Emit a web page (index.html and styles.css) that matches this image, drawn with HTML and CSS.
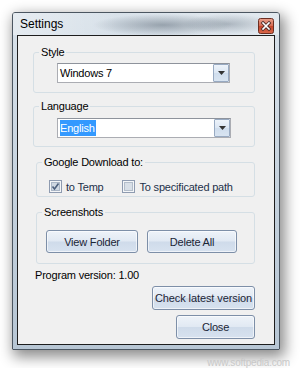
FILE: index.html
```html
<!DOCTYPE html>
<html lang="en">
<head>
  <meta charset="UTF-8">
  <title>Settings</title>
  <link rel="stylesheet" href="styles.css">
</head>
<body>
  <div class="window">
    <div class="titlebar">
      <span class="title">Settings</span>
      <span class="close">
        <svg width="16" height="16" viewBox="0 0 16 16">
          <defs>
            <linearGradient id="red" x1="0" y1="0" x2="0" y2="1">
              <stop offset="0" stop-color="#e9a08c"/>
              <stop offset="0.5" stop-color="#d46a52"/>
              <stop offset="0.51" stop-color="#c5452c"/>
              <stop offset="1" stop-color="#d9684a"/>
            </linearGradient>
          </defs>
          <rect x="0.5" y="0.5" width="15" height="15" rx="2" fill="url(#red)" stroke="#6b2e22"/>
          <path d="M5 5 L11 11 M11 5 L5 11" stroke="#4a2a26" stroke-width="3.2" stroke-linecap="square"/>
          <path d="M5 5 L11 11 M11 5 L5 11" stroke="#fff" stroke-width="1.6" stroke-linecap="square"/>
        </svg>
      </span>
    </div>
    <div class="client">
      <div class="group style-group">
        <span class="legend">Style</span>
        <div class="combo style-combo">
          <span class="value">Windows 7</span>
          <span class="drop"><svg width="7" height="4" viewBox="0 0 7 4"><path d="M0 0 H7 L3.5 4 Z" fill="#333"/></svg></span>
        </div>
      </div>

      <div class="group lang-group">
        <span class="legend">Language</span>
        <div class="combo lang-combo">
          <span class="value"><span class="sel">English</span></span>
          <span class="drop"><svg width="7" height="4" viewBox="0 0 7 4"><path d="M0 0 H7 L3.5 4 Z" fill="#333"/></svg></span>
        </div>
      </div>

      <div class="group google-group">
        <span class="legend">Google Download to:</span>
        <div class="checks">
          <label class="check first">
            <svg width="13" height="13" viewBox="0 0 13 13">
              <rect x="0.5" y="0.5" width="12" height="12" fill="#f4f6f8" stroke="#8e9bb0"/>
              <rect x="2.5" y="2.5" width="8" height="8" fill="#cfd8e2" stroke="#aab6c6"/>
              <path d="M3.5 6.5 L5.5 9 L9.5 3.5" fill="none" stroke="#4c5f7c" stroke-width="1.6"/>
            </svg>
            <span>to Temp</span>
          </label>
          <label class="check">
            <svg width="13" height="13" viewBox="0 0 13 13">
              <rect x="0.5" y="0.5" width="12" height="12" fill="#f4f6f8" stroke="#8e9bb0"/>
              <rect x="2.5" y="2.5" width="8" height="8" fill="#d8dfe7" stroke="#b3bdca"/>
            </svg>
            <span>To specificated path</span>
          </label>
        </div>
      </div>

      <div class="group shots-group">
        <span class="legend">Screenshots</span>
        <div class="buttons">
          <span class="btn view-btn">View Folder</span>
          <span class="btn delete-btn">Delete All</span>
        </div>
      </div>

      <div class="version">Program version: 1.00</div>

      <div class="actions">
        <span class="btn check-btn">Check latest version</span>
        <span class="btn close-btn">Close</span>
      </div>
    </div>
  </div>
  <div class="mark">www.softpedia.com</div>
</body>
</html>
```

FILE: styles.css
```css
body {
  margin: 0;
  background: #fff;
  font-family: "Liberation Sans", Arial, sans-serif;
  font-size: 11px;
  letter-spacing: -0.2px;
  color: #1b1f2a;
}
.window {
  margin: 12px 0 0 12px;
  width: 268px;
  height: 338px;
  box-sizing: border-box;
  border: 1px solid #4b5661;
  border-radius: 3px 3px 1px 1px;
  background: linear-gradient(to bottom, #d9e2ea, #c3d0dc 60%, #b7c6d4);
  box-shadow: 3px 5px 14px 2px rgba(0, 0, 0, 0.45);
  display: flex;
  flex-direction: column;
}
.titlebar {
  height: 22px;
  display: flex;
  align-items: center;
  background:
    radial-gradient(ellipse 70px 11px at 150px 12px, rgba(70, 84, 98, 0.45), rgba(70, 84, 98, 0) 100%),
    radial-gradient(ellipse 45px 10px at 215px 11px, rgba(80, 94, 108, 0.35), rgba(80, 94, 108, 0) 100%),
    linear-gradient(to right, rgba(255,255,255,0.35), rgba(255,255,255,0) 40%, rgba(255,255,255,0.25));
}
.title {
  margin-left: 7px;
  font-size: 12px;
  letter-spacing: 0;
  color: #000;
}
.close {
  margin-left: auto;
  margin-right: 5px;
  margin-top: 4px;
  display: flex;
}
.client {
  margin: 0 4px 4px 4px;
  flex: 1;
  border: 1px solid #1d1d1d;
  background: #f0f0f0;
  padding: 0 19px 0 15px;
}
.group {
  position: relative;
  border: 1px solid #d5dfe5;
  border-radius: 3px;
}
.legend {
  position: absolute;
  top: -8px;
  left: 5px;
  padding: 0 2px;
  line-height: 14px;
  background: #f0f0f0;
  color: #000;
}
.style-group {
  margin-top: 16px;
  padding: 10px 0 9px 23px;
}
.lang-group {
  margin-top: 13px;
  padding: 11px 0 8px 23px;
}
.google-group {
  margin: 15px 0 0 3px;
  padding: 17px 0 3px 12px;
}
.shots-group {
  margin: 15px 0 0 3px;
  padding: 17px 0 10px 9px;
}
.combo {
  display: flex;
  height: 20px;
  box-sizing: border-box;
  border: 1px solid #abadb3;
  border-top-color: #8e939c;
  background: #fff;
  color: #000;
}
.style-combo { width: 173px; }
.lang-combo { width: 174px; }
.value {
  padding-left: 2px;
  line-height: 18px;
}
.sel {
  display: inline-block;
  margin-top: 1px;
  padding: 0 1px 0 0;
  line-height: 16px;
  background: #3399ff;
  color: #fff;
}
.drop {
  margin-left: auto;
  width: 16px;
  box-sizing: border-box;
  border: 1px solid #98aac2;
  border-radius: 1px;
  background: linear-gradient(to bottom, #edf3fa, #dbe6f3 50%, #cfdded 51%, #d8e4f1);
  display: flex;
  align-items: center;
  justify-content: center;
}
.checks {
  display: flex;
  align-items: center;
}
.check {
  display: flex;
  align-items: center;
  gap: 4px;
  color: #23314a;
}
.check svg { display: block; }
.check.first { margin-right: 18px; }
.check + .check span { margin-left: 1px; }
.buttons {
  display: flex;
  gap: 9px;
}
.btn {
  display: flex;
  align-items: center;
  justify-content: center;
  box-sizing: border-box;
  border: 1px solid #7d8fa8;
  border-radius: 3px;
  background: linear-gradient(to bottom, #eef3f9, #e1e9f3 48%, #cfdbea 52%, #d7e2ef);
  box-shadow: inset 0 0 0 1px rgba(255, 255, 255, 0.6);
  color: #1b2536;
}
.view-btn { width: 92px; height: 23px; }
.delete-btn { width: 90px; height: 23px; }
.version {
  margin: 4px 0 0 2px;
  line-height: 15px;
  color: #000;
}
.actions {
  margin-top: 3px;
  display: flex;
  flex-direction: column;
  align-items: flex-end;
  gap: 5px;
}
.check-btn { width: 103px; height: 24px; letter-spacing: -0.1px; }
.close-btn { width: 79px; height: 24px; }
.mark {
  margin: 7px 10px 0 0;
  text-align: right;
  font-size: 10px;
  color: #c8c8c8;
}
```
